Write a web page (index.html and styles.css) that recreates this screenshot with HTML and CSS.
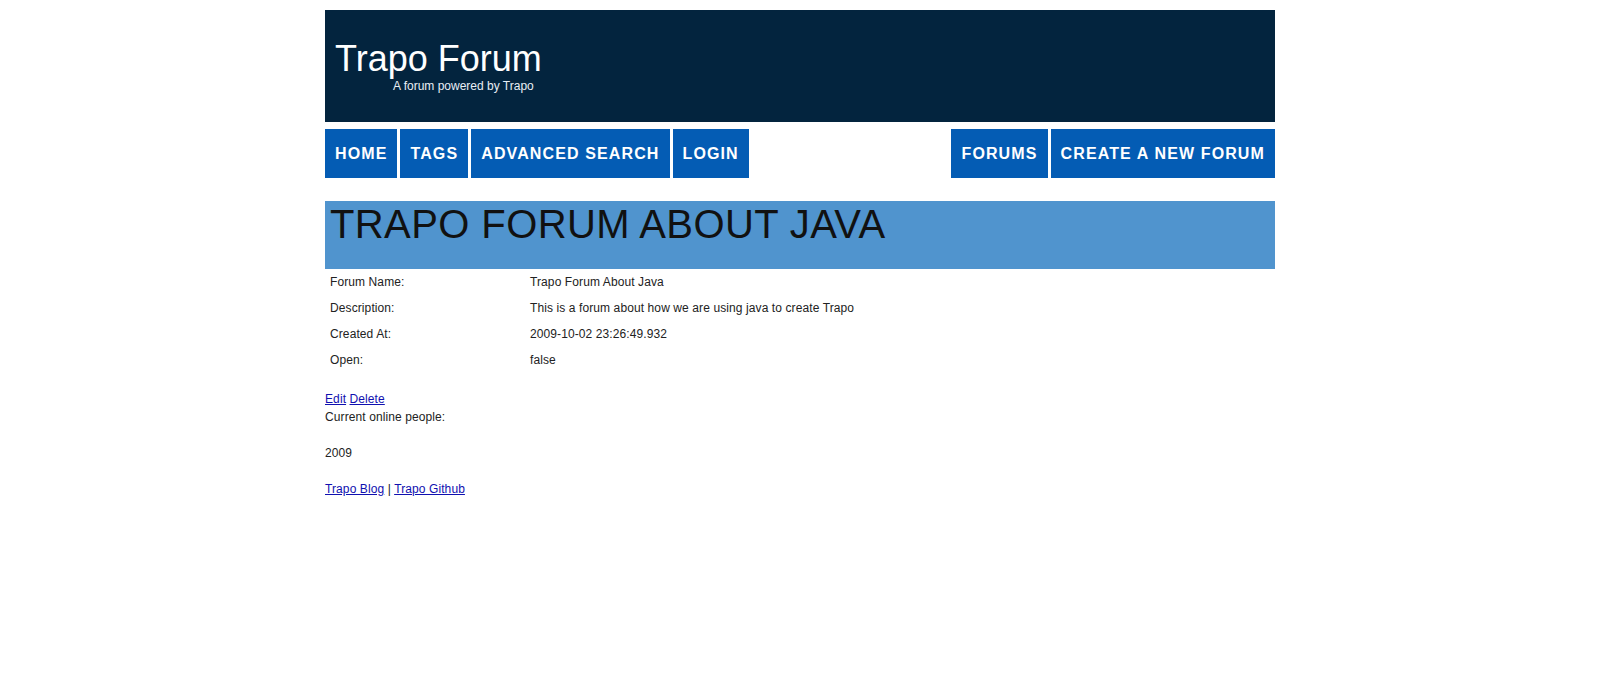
FILE: index.html
```html
<!DOCTYPE html>
<html lang="en">
<head>
<meta charset="utf-8">
<title>Trapo Forum</title>
<link rel="stylesheet" href="styles.css">
</head>
<body>
<div class="page">
  <header class="site-header">
    <div class="site-title">Trapo Forum</div>
    <div class="site-subtitle">A forum powered by Trapo</div>
  </header>
  <nav class="menu">
    <ul class="menu-group">
      <li><a href="#">Home</a></li>
      <li><a href="#">Tags</a></li>
      <li><a href="#">Advanced Search</a></li>
      <li><a href="#">Login</a></li>
    </ul>
    <ul class="menu-group">
      <li><a href="#">Forums</a></li>
      <li><a href="#">Create a new forum</a></li>
    </ul>
  </nav>
  <h1 class="page-title">TRAPO FORUM ABOUT JAVA</h1>
  <table class="details">
    <tr><td class="label">Forum Name:</td><td>Trapo Forum About Java</td></tr>
    <tr><td class="label">Description:</td><td>This is a forum about how we are using java to create Trapo</td></tr>
    <tr><td class="label">Created At:</td><td>2009-10-02 23:26:49.932</td></tr>
    <tr><td class="label">Open:</td><td>false</td></tr>
  </table>
  <div class="actions"><a href="#">Edit</a> <a href="#">Delete</a><br>Current online people:</div>
  <p class="year">2009</p>
  <p class="links"><a href="#">Trapo Blog</a> | <a href="#">Trapo Github</a></p>
</div>
</body>
</html>
```
FILE: styles.css
```css
html, body {
  margin: 0;
  padding: 0;
  background: #ffffff;
}
body {
  font-family: "Liberation Sans", Arial, sans-serif;
  font-size: 12px;
  line-height: 18px;
  letter-spacing: 0.1px;
  color: #222222;
}
.page {
  width: 950px;
  margin: 10px auto 0;
}
.site-header {
  background: #03243e;
  color: #ffffff;
  height: 112px;
  box-sizing: border-box;
  padding: 28px 10px 0;
  letter-spacing: 0;
}
.site-title {
  font-size: 36px;
  line-height: 41px;
}
.site-subtitle {
  font-size: 12px;
  line-height: 14px;
  padding-left: 58px;
  color: #e8eef5;
}
.menu {
  display: flex;
  justify-content: space-between;
  margin-top: 7px;
}
.menu-group {
  display: flex;
  gap: 3px;
  list-style: none;
  margin: 0;
  padding: 0;
}
.menu-group a {
  display: block;
  background: #045cb4;
  color: #ffffff;
  height: 49px;
  line-height: 49px;
  padding: 0 10px;
  font-size: 16px;
  font-weight: bold;
  letter-spacing: 1.12px;
  text-transform: uppercase;
  text-decoration: none;
}
.page-title {
  margin: 23px 0 0;
  background: #5094ce;
  color: #111111;
  font-size: 40px;
  font-weight: normal;
  letter-spacing: 0.4px;
  line-height: 46px;
  padding: 0 5px 22px;
}
.details {
  width: 100%;
  border-collapse: collapse;
  margin-bottom: 17px;
}
.details td {
  padding: 4px 5px;
  vertical-align: top;
  line-height: 18px;
}
.details td.label {
  width: 190px;
}
a {
  color: #1010b0;
}
.actions {
  margin: 0;
}
.year {
  margin: 18px 0;
}
.links {
  margin: 18px 0 0;
}
```
